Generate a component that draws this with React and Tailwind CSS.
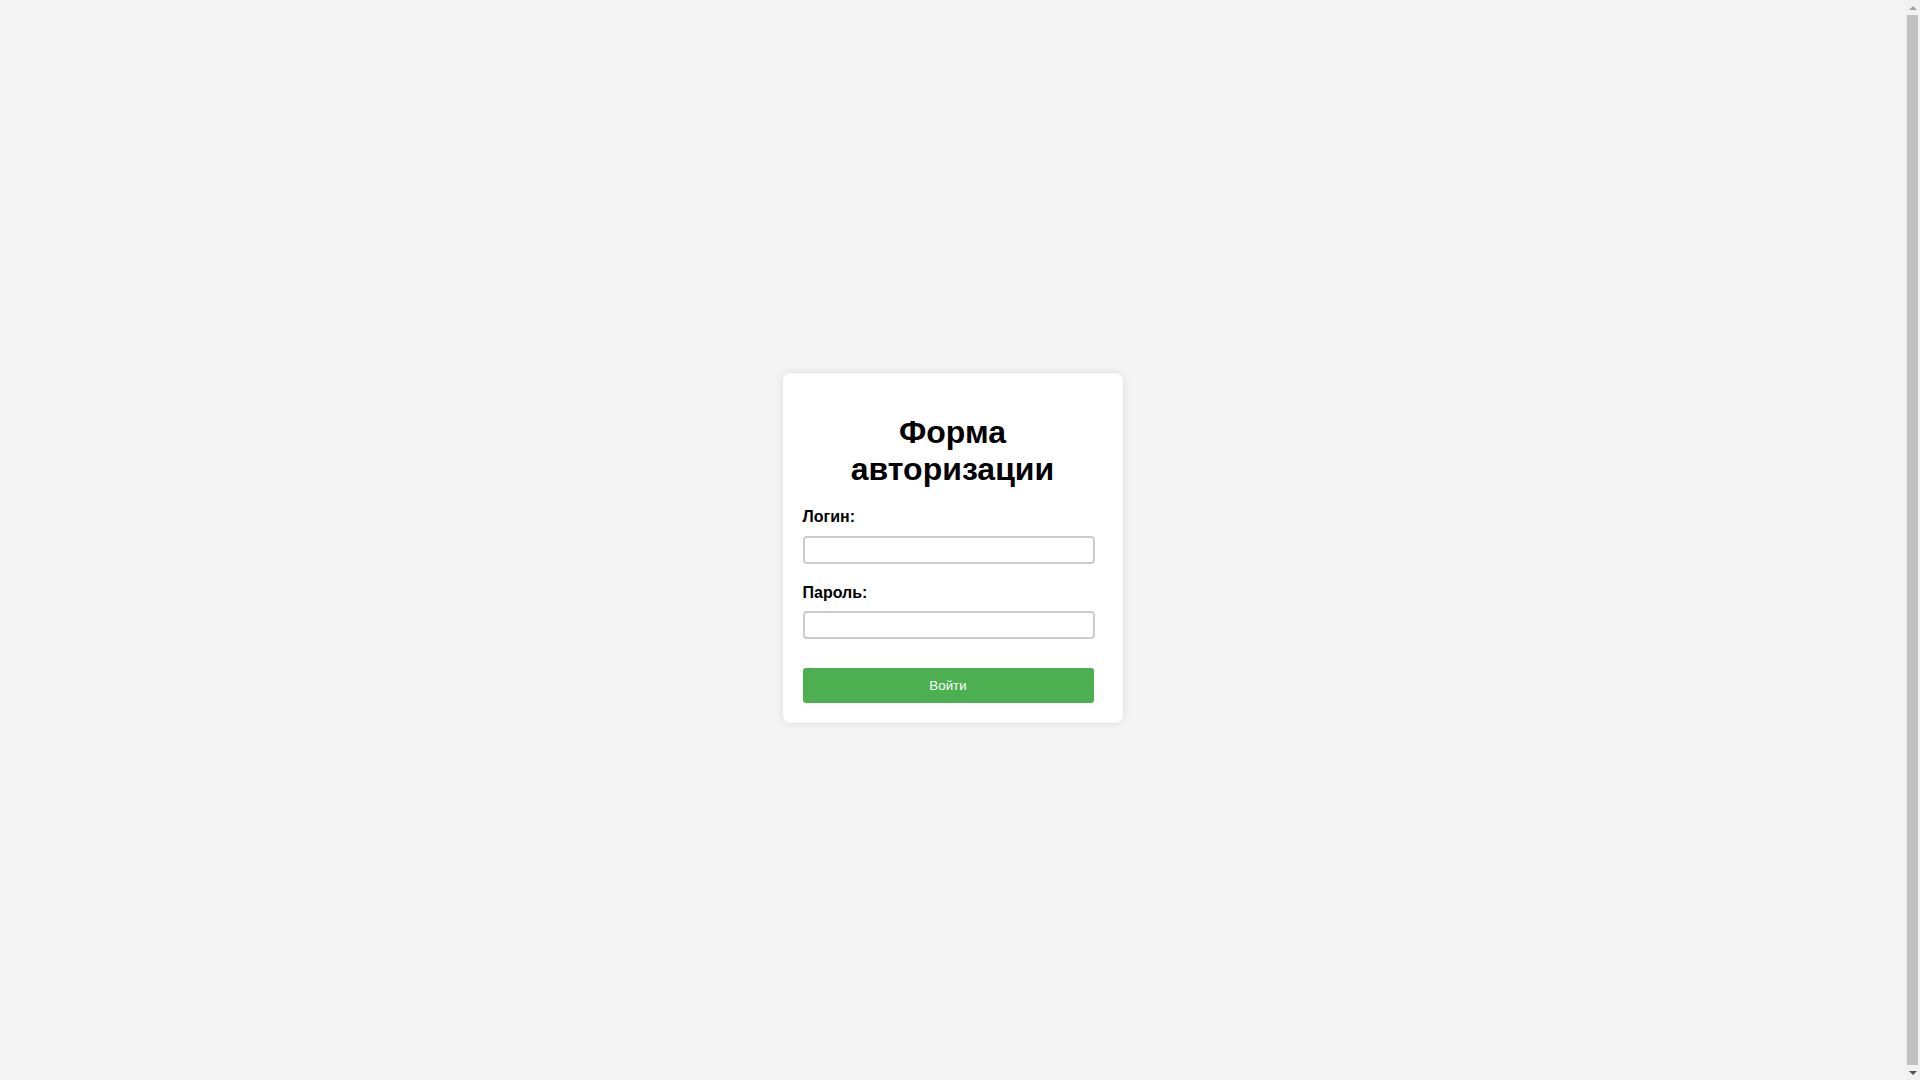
import React from 'react';

const Scrollbar = () => (
  <div className="fixed top-0 right-0 h-screen w-[15px] bg-[#f1f1f1] flex flex-col items-center">
    <div className="h-[15px] w-full flex items-center justify-center">
      <div className="w-0 h-0 border-l-[4px] border-r-[4px] border-b-[4px] border-l-transparent border-r-transparent border-b-[#a3a3a3]" />
    </div>
    <div className="flex-1 w-[11px] bg-[#c1c1c1]" />
    <div className="h-[15px] w-full flex items-center justify-center">
      <div className="w-0 h-0 border-l-[4px] border-r-[4px] border-t-[4px] border-l-transparent border-r-transparent border-t-[#505050]" />
    </div>
  </div>
);

const App = () => {
  return (
    <div className="bg-[#f4f4f4] p-2 pr-[23px] font-['Liberation_Sans',Arial,sans-serif]">
      <div className="h-screen flex items-center justify-center">
        <div className="w-[340px] bg-white rounded-[8px] p-5 shadow-[0_0_10px_rgba(0,0,0,0.1)]">
          <h1 className="text-[32px] leading-[36.8px] font-bold text-black text-center my-[21px]">
            Форма авторизации
          </h1>
          <form onSubmit={(e) => e.preventDefault()}>
            <label className="block text-[16px] leading-[18.4px] font-bold text-black mb-[9px]">
              Логин:
            </label>
            <input
              type="text"
              className="block w-[292px] h-[28px] border-2 border-[#cccccc] rounded-[4px] bg-white mb-[20px] px-1 outline-none"
            />
            <label className="block text-[16px] leading-[18.4px] font-bold text-black mb-[9px]">
              Пароль:
            </label>
            <input
              type="password"
              className="block w-[292px] h-[28px] border-2 border-[#cccccc] rounded-[4px] bg-white px-1 outline-none"
            />
            <button
              type="submit"
              className="block w-[291px] h-[35px] mt-[29px] bg-[#4caf50] text-white text-[13.33px] rounded-[3px] cursor-pointer"
            >
              Войти
            </button>
          </form>
        </div>
      </div>
      <Scrollbar />
    </div>
  );
};

export default App;
